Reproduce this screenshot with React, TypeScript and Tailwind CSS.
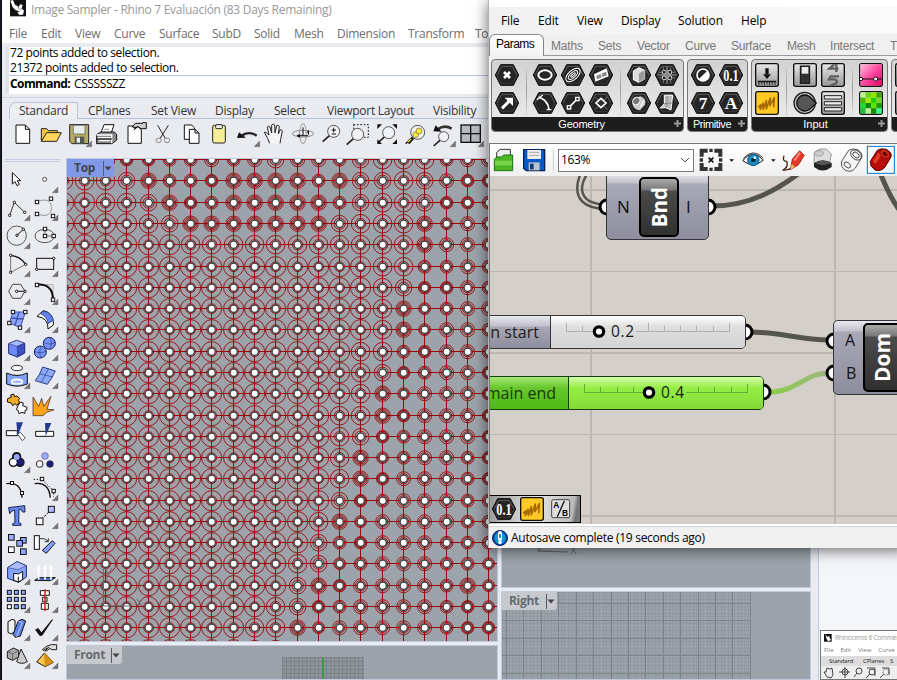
import React from "react";

const sans = "font-['Open_Sans','Noto_Sans',sans-serif]";

/* ---------- Rhino: top toolbar ---------- */
const Corner = ({ x, y }: { x: number; y: number }) => (
  <path d={`M${x} ${y}V${y - 17}L${x - 17} ${y}Z`} fill="#777" stroke="#555" strokeWidth="1" />
);

const lens = (cx: number, cy: number, r = 18) => (
  <g>
    <path d={`M${cx - r * 0.7} ${cy + r * 0.7}L${cx - r - 15} ${cy + r + 13}`} stroke="#222" strokeWidth="5" />
    <circle cx={cx} cy={cy} r={r} fill="#f1f2f5" stroke="#555" strokeWidth="3" />
  </g>
);

const topIcons: React.ReactNode[] = [
  <path d="M48 375H76L89 388V430H48Z M76 375V388H89" fill="#fff" stroke="#111" strokeWidth="3" />,
  <g stroke="#222" strokeWidth="3"><path d="M124 424V386H140L146 392H172V398" fill="#f6c443" /><path d="M124 424L140 398H184L170 424Z" fill="#ffd75e" /></g>,
  <g><path d="M209 374H266V431H216L209 424Z" fill="#b5ae62" stroke="#222" strokeWidth="3" /><path d="M220 376H255V402H220Z" fill="#e9ebed" stroke="#555" strokeWidth="2" /><path d="M224 410H253V431H224Z" fill="#555" /><path d="M230 413H240V428H230Z" fill="#eee" /><Corner x={275} y={440} /></g>,
  <g stroke="#111" strokeWidth="3"><path d="M302 401L312 374H342L333 401Z" fill="#fff" /><path d="M290 404L302 396H342L350 403V420L336 431H290Z" fill="#888" /><path d="M290 405H335V430M293 413H332M296 422H330" fill="none" stroke="#fff" strokeWidth="4" /><path d="M290 417H336" /><path d="M313 388H327" stroke="#888" /></g>,
  <g stroke="#111" strokeWidth="3"><path d="M384 378H412L424 390V430H384Z" fill="#fff" /><path d="M397 381L406 370H428V368H439V386H423L414 380L402 389" fill="#ccc" /><path d="M398 382L409 382M403 388L413 378" /></g>,
  <g fill="none" strokeWidth="3"><path d="M473 376L497 417M505 376L479 417" stroke="#222" /><ellipse cx="476" cy="421" rx="8" ry="7" stroke="#888" /><ellipse cx="501" cy="421" rx="8" ry="7" stroke="#888" /></g>,
  <g fill="#fff" stroke="#111" strokeWidth="3"><path d="M553 375H575L583 383V418H553Z" /><path d="M568 388H585L597 399V430H568Z M585 388V399H597" /></g>,
  <g stroke="#222" strokeWidth="3"><rect x="638" y="376" width="38" height="53" rx="5" fill="#f7ef94" /><rect x="647" y="374" width="20" height="12" rx="3" fill="#eee" /></g>,
  <g><path d="M727 406Q748 392 770 407" fill="none" stroke="#222" strokeWidth="7" /><path d="M711 414L717 397L738 413Z" fill="#111" /><Corner x={779} y={440} /></g>,
  <g fill="#f6f6f6" stroke="#222" strokeWidth="3" strokeLinejoin="round"><path d="M89 430L83 415L73 397Q77 393 84 403L87 405L82 381Q86 375 90 381L95 399L95 375Q99 369 104 375L105 399L110 377Q115 374 118 379L115 402L120 390Q125 388 127 392L122 418L120 430" /></g>,
  <g fill="none" strokeWidth="3"><ellipse cx="189" cy="401" rx="32" ry="10" stroke="#888" /><ellipse cx="189" cy="401" rx="10" ry="30" stroke="#999" /><path d="M177 407H203M189 382V406" stroke="#111" /><path d="M180 401L169 407L180 413ZM201 395L207 390V408Z" fill="#111" stroke="none" /></g>,
  <g>{lens(281, 394)}<path d="M275 390H288M281 383V397M275 402H288" stroke="#111" strokeWidth="3" /></g>,
  <g><rect x="341" y="374" width="44" height="38" fill="none" stroke="#111" strokeWidth="3" strokeDasharray="5 5" />{lens(353, 403)}</g>,
  <g>{lens(446, 398)}<path d="M412 373H426L412 387ZM471 373H457L471 387ZM412 432V418L426 432ZM471 432V418L457 432Z" fill="#111" /></g>,
  <g>{lens(533, 397, 21)}<path d="M505 430L519 414" stroke="#111" strokeWidth="8" /><path d="M503 427L514 417" stroke="#edd63f" strokeWidth="4" /><rect x="519" y="396" width="16" height="16" rx="5" fill="#ffe833" stroke="#665" strokeWidth="2" /><circle cx="537" cy="393" r="9" fill="#ffe833" stroke="#665" strokeWidth="2" /></g>,
  <g>{lens(611, 410, 15)}<path d="M593 388Q614 373 635 386" fill="none" stroke="#333" strokeWidth="8" /><path d="M580 394L587 376L605 395Z" fill="#111" /><Corner x={647} y={440} /></g>,
  <g><rect x="663" y="375" width="58" height="52" fill="#b9bcbe" stroke="#111" strokeWidth="4" /><path d="M692 375V427M663 401H721" stroke="#111" strokeWidth="4" /><Corner x={731} y={440} /></g>,
];

/* ---------- Rhino: side toolbar ---------- */
const Sq = ({ x, y, s = 10, f = "#fff" }: { x: number; y: number; s?: number; f?: string }) => (
  <rect x={x - s / 2} y={y - s / 2} width={s} height={s} fill={f} stroke="#111" strokeWidth="3" />
);
const Dot = ({ x, y }: { x: number; y: number }) => <circle cx={x} cy={y} r="3.6" fill="#fff" stroke="#111" strokeWidth="3" />;
const blue = "#8fa5ff";

type Side = [React.ReactNode, boolean];
const sideIcons: Side[] = [
  [<path d="M37 53V87L45 80L51 92L58 88L52 77H62Z" fill="#fff" stroke="#111" strokeWidth="3" />, false],
  [<circle cx="134" cy="73" r="6" fill="#fff" stroke="#444" strokeWidth="3" />, true],
  [<g><path d="M29 181L43 142L74 172" fill="none" stroke="#333" strokeWidth="3" /><Dot x={29} y={181} /><Dot x={43} y={142} /><Dot x={74} y={172} /></g>, true],
  [<g><path d="M111 140Q153 124 155 158Q153 192 111 177" fill="none" stroke="#999" strokeWidth="3" /><Sq x={111} y={141} /><Sq x={153} y={131} /><Sq x={111} y={177} /><Sq x={159} y={183} /></g>, true],
  [<g><circle cx="50" cy="242" r="29" fill="none" stroke="#555" strokeWidth="3" /><path d="M51 241L70 223" stroke="#111" strokeWidth="3" /><Dot x={51} y={241} /><Dot x={70} y={223} /></g>, true],
  [<g><ellipse cx="134" cy="243" rx="29" ry="20" fill="none" stroke="#555" strokeWidth="3" /><path d="M135 221V243H161" fill="none" stroke="#777" strokeWidth="3" /><Sq x={135} y={222} /><Sq x={135} y={243} /><Sq x={161} y={243} /></g>, true],
  [<g><path d="M32 301V352L77 328" fill="none" stroke="#777" strokeWidth="3" /><path d="M32 301Q62 304 77 328" fill="none" stroke="#111" strokeWidth="4" /><Dot x={32} y={301} /><Dot x={32} y={352} /><Dot x={77} y={328} /></g>, true],
  [<g><rect x="110" y="310" width="51" height="33" fill="none" stroke="#111" strokeWidth="3" /><Dot x={161} y={310} /><Dot x={110} y={343} /></g>, true],
  [<g><path d="M26 409L38 388H62L75 409L62 430H38Z" fill="none" stroke="#444" strokeWidth="3" /><path d="M50 409H75" stroke="#111" strokeWidth="3" /><Dot x={50} y={409} /><Dot x={75} y={409} /></g>, true],
  [<g><path d="M112 389H159V434" fill="none" stroke="#aaa" strokeWidth="3" /><path d="M112 389Q159 386 159 434" fill="none" stroke="#111" strokeWidth="6" /><Sq x={111} y={390} /><Sq x={159} y={434} /></g>, true],
  [<g><path d="M39 471H76L61 518L28 504Z" fill={blue} stroke="#3b52a8" strokeWidth="3" /><path d="M57 471L45 511M34 489L70 492" stroke="#3b52a8" strokeWidth="4" /><Sq x={39} y={471} /><Sq x={76} y={471} /><Sq x={28} y={504} /><Sq x={60} y={518} /></g>, true],
  [<g stroke="#111" strokeWidth="3"><path d="M111 484L130 467Q158 473 160 501V510L144 522Q146 489 111 484Z" fill="#fff" /><path d="M122 476Q140 484 145 506L160 496Q156 474 132 468Z" fill="#5f82ec" stroke="#1b2a6b" strokeWidth="2" /></g>, true],
  [<g stroke="#1b2a6b" strokeWidth="3" strokeLinejoin="round"><path d="M26 41L50 31L74 40V69L52 81L26 71Z" fill="#7089f8" /><path d="M26 41L50 31L74 40L52 49Z" fill="#a9b9ff" strokeWidth="1.5" /><path d="M52 49L74 40V69L52 81Z" fill="#3a50c4" strokeWidth="1.5" /></g>, true],
  [<g fill="#7894fa" stroke="#15245f" strokeWidth="3"><circle cx="148" cy="40" r="18" /><path d="M131 37Q148 47 166 37M149 22Q159 36 150 57" fill="none" strokeWidth="1.500" /><circle cx="121" cy="66" r="18" /><path d="M104 64Q121 73 139 63M124 49Q114 66 124 84" fill="none" strokeWidth="1.500" /></g>, true],
  [<g><ellipse cx="51" cy="114" rx="17" ry="8" fill="#fff" stroke="#333" strokeWidth="3" /><path d="M20 129Q51 144 82 129V162Q51 175 20 162Z" fill="#82a1fb" stroke="#111" strokeWidth="3" /><ellipse cx="51" cy="155" rx="16" ry="7" fill="#a6bbff" stroke="#fff" strokeWidth="5" /></g>, true],
  [<g fill="#8da9fb" stroke="#293c7d" strokeWidth="3"><path d="M128 111L166 123Q160 134 155 144L142 163L106 152Q112 142 118 134Z" /><path d="M146 116L124 157M118 131L158 141" fill="none" strokeWidth="2" /></g>, true],
  [<g stroke="#111" strokeWidth="3"><path d="M34 202L32 195L41 192L44 200L51 198L59 205L55 211L59 216L51 226L45 221L38 227L34 219L22 216L23 206Z" fill="#f4ac27" /><path d="M55 225L62 216L70 219L68 227L81 232L80 240L75 241V250L66 247L57 251L54 241L49 239Z" fill="#fff" /></g>, false],
  [<path d="M99 257V201L116 229L125 205L131 229L153 199L141 238L162 239L140 247L129 257Z" fill="#ffa218" stroke="#222" strokeWidth="2" />, false],
  [<g><path d="M19 302H52V317H19Z" fill="#fff" stroke="#111" strokeWidth="3" /><path d="M52 312L61 307L76 324L67 332Z" fill="#fff" stroke="#555" strokeWidth="3" /><path d="M49 277H69L53 318Z" fill="#23398d" /></g>, false],
  [<g><path d="M107 304H161V319H107Z" fill="#fff" stroke="#111" strokeWidth="3" /><path d="M135 279H154L137 318Z" fill="#23398d" /></g>, false],
  [<g stroke="#111" strokeWidth="6"><circle cx="50" cy="380" r="11" /><circle cx="40" cy="397" r="11" /><circle cx="60" cy="397" r="11" /><g stroke="none"><circle cx="40" cy="397" r="10" fill="#fff" /><circle cx="61" cy="397" r="10" fill="#1c1c78" /><circle cx="50" cy="381" r="9" fill="#9aa0ff" /></g></g>, true],
  [<g><circle cx="135" cy="378" r="10" fill="#9fa9ff" stroke="#558" strokeWidth="2" /><circle cx="119" cy="402" r="10" fill="#fff" stroke="#222" strokeWidth="3" /><circle cx="150" cy="402" r="10" fill="#1d1c82" stroke="#222" strokeWidth="2" /></g>, false],
  [<g><path d="M19 461Q63 453 66 503" fill="none" stroke="#111" strokeWidth="4" /><Sq x={36} y={459} s={9} /><Sq x={66} y={489} s={9} /></g>, false],
  [<g><path d="M104 461Q147 455 151 503" fill="none" stroke="#111" strokeWidth="4" /><path d="M101 448H126L161 483V500" fill="none" stroke="#111" strokeWidth="3" strokeDasharray="4 5" /><Sq x={126} y={447} /><Sq x={161} y={483} /></g>, true],
  [<path d="M26 23L74 17L75 36H68L61 27L57 28L56 68L63 71V76H38V71L45 68L44 30L36 33L29 41Z" fill="#6788f1" stroke="#15234c" strokeWidth="3" />, false],
  [<g><path d="M124 58L149 34" stroke="#111" strokeWidth="3" strokeDasharray="8 4" /><path d="M145 32H152V39" stroke="#111" strokeWidth="3" fill="none" /><Sq x={154} y={28} s={18} f="#b5c0ff" /><Sq x={119} y={64} s={20} f="#f6f6f6" /></g>, true],
  [<g><Sq x={34} y={112} s={17} f="#9eafff" /><Sq x={70} y={121} s={17} f={blue} /><Sq x={59} y={130} s={17} f={blue} /><Sq x={34} y={149} s={17} /><Sq x={70} y={155} s={17} f={blue} /></g>, false],
  [<g stroke="#111" strokeWidth="3"><rect x="103" y="107" width="15" height="41" fill="#fff" /><path d="M157 122L165 130L139 160L127 151Z" fill="#869fff" /><path d="M120 116Q134 113 144 123M145 115V125H134" fill="none" strokeWidth="2.5" /></g>, false],
  [<g stroke="#13276c" strokeWidth="3" strokeLinejoin="round"><path d="M23 203L51 185L79 197V231L56 247L23 235Z" fill="#85a5ff" /><path d="M23 203L51 185L79 197L54 209Z" fill="#adbdff" strokeWidth="1.500" /><path d="M41 220L55 222L68 214V238L56 246L41 241Z" fill="#fff" stroke="#111" /><path d="M55 247V230" stroke="#111" /></g>, true],
  [<g><path d="M104 241L117 233H166L151 242Z" fill="#5575e8" stroke="#111" strokeWidth="3" /><path d="M116 239V203M135 239V203M153 239V203" stroke="#fff" strokeWidth="5" /><path d="M109 207L116 194L123 207ZM128 207L135 194L142 207ZM146 207L153 194L160 207Z" fill="#fff" /></g>, true],
  [<g>{[28, 49, 70].map((x) => [277, 298, 320].map((y) => <Sq key={x + "-" + y} x={x} y={y} s={12} f={x === 28 && y === 320 ? "#fff" : "#91a6ff"} />))}</g>, true],
  [<g fill="#fff" stroke="#111" strokeWidth="3"><path d="M121 272H148V286H121Z" /><path d="M128 292H141V305H128Z" /><path d="M124 310H145V328H124Z" /><path d="M135 268V333" stroke="#e02a2a" strokeWidth="5" /></g>, true],
  [<g stroke="#111" strokeWidth="3"><path d="M24 365L36 358L45 361V395L33 402L24 397Z" fill="#eee" /><path d="M55 363L66 358L77 363L61 408L46 412L39 403Z" fill="#5a7fe9" /><path d="M55 363L67 368L50 410" fill="none" stroke="#c3d0ff" /></g>, true],
  [<path d="M107 389L115 386L124 399L157 359L126 406H119Z" fill="#111" stroke="#111" strokeWidth="3" />, true],
  [<g stroke="#222" strokeWidth="3"><path d="M22 455L40 444L56 451V471L38 481L22 474Z" fill="#aaa" /><path d="M22 455L38 461L56 451M38 461V481" fill="none" strokeWidth="1.500" /><path d="M63 447L82 485Q64 495 50 485Z" fill="#ccc" /></g>, true],
  [<g stroke="#222" strokeWidth="3"><path d="M133 459L160 487L136 500L110 486Z" fill="#ffc548" /><path d="M133 459L136 500L160 487Z" fill="#d99017" stroke="#a86c10" strokeWidth="1" /><path d="M126 450L141 438L154 434H170V449H156L145 443L134 454" fill="#ddd" /><path d="M129 452L146 442M137 454L148 447" /></g>, true],
];

/* ---------- Rhino: circles model in the Top viewport ---------- */
const rings: Record<string, number[]> = {
  a: [10.1, 4.9],
  b: [9.3, 5.2],
  c: [8.3, 5.6],
  d: [7.7, 6.2, 4.9],
  e: [6.4, 5.1],
  f: [5.9, 4.9],
  g: [7, 5.1],
  x: [6.2, 5.4, 4.8],
};
const model = [
  "bbxxeegegcggecbbbegg",
  "bbcdeexddddedccbcgxx",
  "abbcdxedddddecbbcxxe",
  "aaabcdddddddcbbbdfge",
  "aaaaabbbbbbbbbbbdgge",
  "aaaaaaaaaaaaaabbeege",
  "aaaaaaaaaaaaaabcxxge",
  "aaaaaaaaaaaaaabdfegg",
  "aaaaaaaaaaaaaabdfgge",
  "aaaaaaaaaaaaabbexgge",
  "aaaaaaaaaaaaabcxeggx",
  "aaaaaaaaaaaaabdfgggx",
  "aaaaaaaaaaaabbdxgggx",
  "aaaaaaaaaaaabcxegggx",
  "aaaaaaaaaaaabdfeggex",
  "aaaaaaaaaaaabdxgggex",
  "aaaaaaaaaaaacxegggee",
  "aaaaaaaaaaabdfggggee",
  "aaaaaaaaaaacexgggeee",
  "aaaaaaaaaabcfegggeef",
  "aaaaaaaaaacdxggggedf",
  "aaaaaaaaabcxeggggexf",
  "aaaaaaaabbdfgggggexx",
  "aaaaaaaabbcfggggggxx",
];
const PITCH = 21.28;

const CircleModel = () => {
  const cols = Array.from({ length: 21 }, (_, i) => i - 1);
  const px = (i: number) => Math.round(16.8 + PITCH * i) + 0.5;
  const py = (j: number) => Math.round(0.15 + PITCH * j) + 0.5;
  return (
    <svg width="430" height="482" viewBox="0 0 430 482" className="block">
      <g stroke="#98080c" strokeWidth="1" shapeRendering="crispEdges">
        {cols.map((i) => <path key={i} d={`M${px(i)} 0V482`} />)}
        {model.map((_, j) => <path key={j} d={`M0 ${py(j)}H430`} />)}
      </g>
      <g fill="none" stroke="#98080c" strokeWidth="0.9">
        {model.map((row, j) =>
          cols.map((i) => rings[row[Math.max(0, i)]].map((r) => <circle key={`${i}-${j}-${r}`} cx={px(i) + 0.1} cy={py(j) + 0.2} r={r} />)),
        )}
      </g>
      <g fill="#fff" stroke="#3a3c3e" strokeWidth="1.3">
        {model.map((_, j) => cols.map((i) => <circle key={`${i}-${j}`} cx={px(i) + 0.2} cy={py(j) + 0.2} r="3.6" />))}
      </g>
      <g stroke="#63676b" strokeWidth="1" fill="none">
        <path d="M36.500 447V410M36.500 447H64M38 409L41 415M45 409L39 420M70 440L75 447M75 440L70 447" />
      </g>
    </svg>
  );
};

const ViewTag = ({ label, active, w }: { label: string; active?: boolean; w: string }) => (
  <div className={`flex h-[18px] items-center ${w} ${active ? "bg-[#8299ea]" : "rounded-br-[3px] bg-[#c6cacf]"} text-[12px] font-bold ${active ? "text-[#3f4450]" : "text-[#666a6e]"}`}>
    <span className="flex-1 pl-[7px] leading-[18px] tracking-[-0.300px]">{label}</span>
    <span className="flex h-[15px] w-[11px] items-center border-l border-[#555b66]">
      <svg width="8" height="5" className="shrink-0"><path d="M0.500 0.500H7.500L4 4.500Z" fill="#444" /></svg>
    </span>
  </div>
);

/* ---------- Grasshopper ribbon ---------- */
const Hex = ({ children }: { children?: React.ReactNode }) => (
  <svg width="26" height="24" viewBox="0 0 78 72" className="shrink-0">
    <path d="M4 36L20 5H58L74 36L58 67H20Z" fill="#252525" stroke="#080808" strokeWidth="3" strokeLinejoin="round" />
    <path d="M9 36L23 10H55L69 36" fill="none" stroke="#666" strokeWidth="2.500" />
    <path d="M9 37L23 62H55L69 37" fill="none" stroke="#444" strokeWidth="2" />
    {children}
  </svg>
);
const HexText = ({ t }: { t: string }) => (
  <Hex><text x="39" y="53" textAnchor="middle" fontFamily="Liberation Serif, serif" fontWeight="700" fontSize="50" fill="#fff" textLength={t.length > 1 ? 46 : t === "7" ? 26 : 38} lengthAdjust="spacingAndGlyphs">{t}</text></Hex>
);
const Tile = ({ children, yellow }: { children?: React.ReactNode; yellow?: boolean }) => (
  <svg width="24" height="24" viewBox="0 0 72 72" className="shrink-0">
    <defs><linearGradient id="tile" x2="0" y2="1"><stop stopColor="#e8e8e8" /><stop offset="1" stopColor="#999" /></linearGradient></defs>
    <rect x="2" y="2" width="68" height="68" rx="6" fill={yellow ? "#ffc926" : "url(#tile)"} stroke="#111" strokeWidth="4" />
    {children}
  </svg>
);
const Scribble = () => (
  <Tile yellow><path d="M10 49L16 42L16 55L24 36L25 55L34 29L34 53L46 21L45 44L58 20L56 49" fill="none" stroke="#a56900" strokeWidth="5" strokeLinejoin="round" /></Tile>
);

const geomA = [
  <Hex><path d="M30 27L48 45M48 27L30 45" stroke="#fff" strokeWidth="8" /></Hex>,
  <Hex><path d="M24 52L45 31" stroke="#fff" strokeWidth="9" /><path d="M32 20H57V45Z" fill="#fff" /></Hex>,
];
const geomB = [
  <Hex><ellipse cx="39" cy="36" rx="20" ry="14" fill="none" stroke="#fff" strokeWidth="6" /></Hex>,
  <Hex><g fill="none" stroke="#fff" strokeWidth="3" transform="rotate(-42 39 36)"><ellipse cx="39" cy="36" rx="26" ry="14" /><ellipse cx="39" cy="36" rx="17" ry="8" /><ellipse cx="39" cy="36" rx="9" ry="3" /></g></Hex>,
  <Hex><path d="M18 34L56 16L62 40L22 56Z" fill="#fff" /><path d="M25 38L54 26L57 37L27 49Z" fill="#888" /><path d="M38 30L44 46" stroke="#fff" strokeWidth="3" /></Hex>,
  <Hex><path d="M20 18Q49 29 51 56" fill="none" stroke="#fff" strokeWidth="5" /><path d="M15 26L32 12M44 56H58" stroke="#fff" strokeWidth="4" /></Hex>,
  <Hex><path d="M27 49L52 24" stroke="#fff" strokeWidth="5" /><path d="M22 44H32V54H22ZM47 19H57V29H47Z" fill="#333" stroke="#fff" strokeWidth="4" /></Hex>,
  <Hex><path d="M22 18L57 55M57 18L22 55" stroke="#999" strokeWidth="2" /><path d="M39 22L54 36L39 50L24 36Z" fill="#333" stroke="#fff" strokeWidth="5" /></Hex>,
];
const geomC = [
  <Hex><path d="M22 24L39 14L56 22V48L38 58L22 50Z" fill="#ddd" stroke="#fff" strokeWidth="3" /><path d="M22 24L39 31V57L56 48V22L39 31Z" fill="#999" /></Hex>,
  <Hex><g fill="none" stroke="#ddd" strokeWidth="3"><path d="M39 10V62M12 36H66" stroke="#aaa" /><rect x="25" y="22" width="11" height="11" rx="3" /><rect x="42" y="22" width="11" height="11" rx="3" /><rect x="25" y="39" width="11" height="11" rx="3" /><rect x="42" y="39" width="11" height="11" rx="3" /><path d="M28 13V20M50 13V20M28 52V59M50 52V59M16 28H23M16 44H23M55 28H62M55 44H62" stroke="#888" /></g></Hex>,
  <Hex><path d="M24 22L44 16Q62 23 57 41L42 58Q22 56 19 38Z" fill="#ccc" /><ellipse cx="31" cy="30" rx="12" ry="10" transform="rotate(-50 31 30)" fill="#777" stroke="#fff" strokeWidth="3" /><path d="M43 48L54 29" stroke="#fff" strokeWidth="4" /></Hex>,
  <Hex><path d="M31 13H56L51 57L35 50L19 51L31 38Z" fill="#bbb" stroke="#fff" strokeWidth="3" /><path d="M40 14L38 49M29 38L55 36" stroke="#777" strokeWidth="2" /></Hex>,
];
const prim = [
  <Hex><circle cx="39" cy="36" r="18" fill="none" stroke="#fff" strokeWidth="5" /><path d="M26 49A18 18 0 0 0 52 23Z" fill="#fff" /></Hex>,
  <HexText t="0.1" />,
  <HexText t="7" />,
  <HexText t="A" />,
];
const inA = [
  <Tile><path d="M36 16V34" stroke="#111" strokeWidth="10" /><path d="M24 34H48L36 48ZM8 53H64V58H8Z" fill="#111" /><path d="M12 57V66M20 57V64M28 57V66M36 57V64M44 57V66M52 57V64M60 57V66" stroke="#222" strokeWidth="3" /></Tile>,
  <Scribble />,
];
const inB = [
  <Tile><rect x="22" y="9" width="28" height="52" fill="#333" stroke="#111" strokeWidth="3" /><rect x="26" y="12" width="20" height="20" fill="#eee" /></Tile>,
  <Tile><path d="M40 4L25 17H52M46 3V27M54 40H29L24 49H40Q54 53 44 62L28 68" fill="none" stroke="#5f5f5f" strokeWidth="7" /></Tile>,
  <svg width="24" height="24" viewBox="0 0 72 72"><circle cx="35" cy="36" r="32" fill="#bbb" stroke="#222" strokeWidth="4" /><path d="M50 17L70 36L50 55A24 24 0 1 1 50 17Z" fill="#555" stroke="#111" strokeWidth="4" /></svg>,
  <Tile><path d="M10 14H62V24H10ZM10 32H62V42H10ZM10 50H62V60H10Z" fill="#eee" stroke="#222" strokeWidth="3" /></Tile>,
];
const greens = ["#bdf28c", "#68d71c", "#91e900", "#3ca300", "#4cb500", "#a3e600", "#1ad400", "#7bd32c", "#1ade2b", "#0f8900", "#5fe500", "#1a9d00", "#1dbe32", "#b9f09c", "#188c00", "#30ff8a"];
const inC = [
  <Tile><defs><linearGradient id="pink" x2="1" y2="1"><stop stopColor="#ffc0dc" /><stop offset=".5" stopColor="#ff4aa0" /><stop offset="1" stopColor="#e40067" /></linearGradient></defs><rect x="4" y="4" width="64" height="64" fill="url(#pink)" /><path d="M4 48H68" stroke="#111" strokeWidth="3" /><circle cx="6" cy="48" r="5" fill="#fff" stroke="#111" strokeWidth="3" /><circle cx="50" cy="48" r="6" fill="#fff" stroke="#111" strokeWidth="3" /></Tile>,
  <Tile>{greens.map((c, i) => <rect key={i} x={4 + (i % 4) * 16} y={4 + Math.floor(i / 4) * 16} width="16" height="16" fill={c} />)}</Tile>,
];

const Cells = ({ items, n }: { items: React.ReactNode[]; n: 1 | 2 | 3 }) => (
  <div className={`grid grid-rows-2 ${n === 1 ? "grid-cols-[28px]" : n === 2 ? "grid-cols-[28px_28px]" : "grid-cols-[28px_28px_28px]"}`}>
    {items.map((it, i) => <div key={i} className="flex h-[28px] items-center justify-center">{it}</div>)}
  </div>
);
const Sep = () => <div className="mx-[4.500px] h-[54px] w-px self-center bg-gradient-to-b from-[#ddd] via-[#999] to-[#ddd]" />;
const Group = ({ label, w, children }: { label: string; w: string; children?: React.ReactNode }) => (
  <section className={`flex h-[73px] shrink-0 flex-col overflow-hidden rounded-[4px] border border-[#777] bg-gradient-to-b from-[#d2d2d2] to-[#efefef] ${w}`}>
    <div className="flex h-[58px] px-px pt-px">{children}</div>
    <div className="relative flex h-[14px] items-center justify-center bg-[#1d1d1d] font-['Liberation_Sans',sans-serif] text-[11px] leading-[14px] text-white">
      <span className={label === "Primitive" ? "pr-[11px] tracking-[-0.450px]" : label === "Input" ? "pr-[8px]" : "pr-[12px] tracking-[-0.250px]"}>{label}</span>
      <svg width="7" height="7" className="absolute right-[2px] top-[3px]"><path d="M3.500 0V7M0 3.500H7" stroke="#999" strokeWidth="2" /></svg>
    </div>
  </section>
);

/* ---------- Grasshopper canvas ---------- */
const Core = ({ label, cls }: { label: string; cls: string }) => (
  <div className={`absolute flex items-center justify-center rounded-[5px] border-[2px] border-black bg-[linear-gradient(#aaa_0,#777_11px,#4b4b4b_12px,#303030_100%)] ${cls}`}>
    <span className="rotate-[-90deg] font-bold leading-none text-white">{label}</span>
  </div>
);
const metal = "bg-[linear-gradient(#e9e9ef_0,#c1c0cb_10px,#a9a8b6_11px,#8e8d9d_100%)]";

const Grip = ({ x, y, left }: { x: number; y: number; left?: boolean }) => (
  <path d={left ? `M${x} ${y - 7}A7 7 0 0 0 ${x} ${y + 7}` : `M${x} ${y - 7}A7 7 0 0 1 ${x} ${y + 7}`} fill="#fff" stroke="#000" strokeWidth="3" />
);

const Slider = ({ value, green, knob }: { value: string; green?: boolean; knob: number }) => {
  const ticks = Array.from({ length: 11 }, (_, i) => ({ x: 15.5 + Math.round(i * 16.3), top: i % 5 ? 10 : 7 })).filter(
    (t) => t.x < knob - 6 || t.x > knob + 36,
  );
  return (
    <svg width="194" height="31" viewBox="0 0 194 31" className="block">
      <g stroke={green ? "#67ae31" : "#b0b0b0"} strokeWidth="1">
        <path d={`M15 15.500H${knob - 6}M${knob + 37} 15.500H179`} />
        {ticks.map((t) => <path key={t.x} d={`M${t.x} ${t.top}V15`} />)}
      </g>
      <circle cx={knob} cy="15.500" r="4.700" fill="#fff" stroke="#000" strokeWidth="3.200" />
      <text x={knob + 12} y="21" fontSize="15.500" fill="#1b1b1b" textLength="23">{value}</text>
    </svg>
  );
};

const Canvas = () => (
  <div className="relative h-[348px] overflow-hidden bg-[#d4cfc8]">
    <svg width="407" height="348" viewBox="490 176 407 348" className="absolute inset-0">
      <g stroke="#bcb8b1" fill="none">
        <path d="M490 190H897M490 353H897M490 516H897M591 176V524M835 176V524" strokeWidth="2" />
        <path d="M490 271.500H897M490 434.500H897" />
      </g>
      <g fill="none" stroke="#55554f">
        <path d="M582 170C573 190 575 207 604 209" strokeWidth="2.500" />
        <path d="M590 170C577 187 579 203 604 204.500" strokeWidth="2.500" />
        <path d="M712 206C750 206 778 190 806 168" strokeWidth="5" />
        <path d="M879 170Q889 196 900 211" strokeWidth="5" />
        <path d="M750 332C780 332 800 340 829 340" strokeWidth="5" />
      </g>
      <linearGradient id="wire" x2="1"><stop stopColor="#88cf43" /><stop offset="1" stopColor="#9eb583" /></linearGradient>
      <path d="M768 392C798 392 804 373 829 373" stroke="url(#wire)" strokeWidth="5" fill="none" />
      <Grip x={607} y={207} left /><Grip x={708} y={207} />
      <Grip x={745} y={332} /><Grip x={763} y={392} />
      <Grip x={834} y={341} left /><Grip x={834} y={373} left />
    </svg>
    <div className={`absolute left-[116px] top-[-4px] h-[68px] w-[103px] rounded-[5px] border-[1.500px] border-[#34343a] ${metal} text-[17px] text-[#111]`}>
      <span className="absolute left-[10px] top-[21px]">N</span>
      <span className="absolute left-[79px] top-[21px]">I</span>
      <Core label="Bnd" cls="left-[32px] top-[4px] h-[60px] w-[40px] text-[20.500px]" />
    </div>
    <div className="absolute left-[-60px] top-[139px] flex h-[34px] w-[316px] overflow-hidden rounded-[5px] border-[1.500px] border-[#34343a] text-[16px] text-[#1b1b1b]">
      <div className={`flex w-[120px] items-center justify-end border-r-[1.500px] border-[#34343a] pr-[11px] tracking-[0.050px] ${metal}`}>n&nbsp;start</div>
      <div className="flex-1 bg-[linear-gradient(#fff,#dedede_11px,#d4d4d4)]"><Slider value="0.2" knob={48} /></div>
    </div>
    <div className="absolute left-[-60px] top-[200px] flex h-[34px] w-[334px] overflow-hidden rounded-[5px] border-[1.500px] border-[#133f08] text-[16px] text-[#173a08]">
      <div className="flex w-[138px] items-center justify-end whitespace-nowrap border-r-[1.500px] border-[#133f08] bg-[linear-gradient(#a6e878,#67c72c_11px,#4eb914)] pr-[12px]">main end</div>
      <div className="flex-1 bg-[linear-gradient(#d7fbac,#95ee45_11px,#83da36)]"><Slider value="0.4" knob={80} green /></div>
    </div>
    <div className={`absolute left-[343px] top-[144px] h-[75px] w-[90px] rounded-[5px] border-[1.500px] border-[#34343a] ${metal} text-[16px] text-[#111]`}>
      <span className="absolute left-[11px] top-[7px]">A</span>
      <span className="absolute left-[12px] top-[40px]">B</span>
      <Core label="Dom" cls="left-[29px] top-[2px] h-[69px] w-[40px] text-[21px]" />
    </div>
    <div className="absolute bottom-[1px] left-0 flex h-[28px] w-[91px] items-center border-[1.500px] border-l-0 border-black bg-[linear-gradient(100deg,#999,#e4e4e4_50%,#bbb_90%,#777_94%)] pl-[1px]">
      <HexText t="0.1" />
      <span className="ml-[3px]"><Scribble /></span>
      <svg width="20" height="20" viewBox="0 0 60 60" className="ml-[7px]">
        <rect x="2" y="2" width="54" height="54" rx="5" fill="#dedede" stroke="#444" strokeWidth="3" />
        <path d="M40 6L19 53" stroke="#111" strokeWidth="4" />
        <text x="7" y="28" fontFamily="Liberation Sans" fontSize="25" fontWeight="700">A</text>
        <text x="33" y="50" fontFamily="Liberation Sans" fontSize="25" fontWeight="700">B</text>
      </svg>
    </div>
  </div>
);

const rhinoMenu = [["File", "w-[32px]"], ["Edit", "w-[34px]"], ["View", "w-[39px]"], ["Curve", "w-[45px]"], ["Surface", "w-[53px]"], ["SubD", "w-[42px]"], ["Solid", "w-[40px]"], ["Mesh", "w-[43px]"], ["Dimension", "w-[71px]"], ["Transform", "w-[67px]"], ["To", "w-[20px]"]];
const rhinoTabs = [["CPlanes", "w-[63px]"], ["Set View", "w-[64px]"], ["Display", "w-[59px]"], ["Select", "w-[53px]"], ["Viewport Layout", "w-[106px]"], ["Visibility", "w-[60px]"]];
const ghMenu = [["File", "w-[37px]"], ["Edit", "w-[39px]"], ["View", "w-[44px]"], ["Display", "w-[57px]"], ["Solution", "w-[63px]"], ["Help", "w-[40px]"]];
const ghTabs = [["Maths", "w-[47px]"], ["Sets", "w-[39px]"], ["Vector", "w-[48px]"], ["Curve", "w-[46px]"], ["Surface", "w-[56px]"], ["Mesh", "w-[43px]"], ["Intersect", "w-[60px]"], ["T", "w-[8px]"]];

const RhinoLogo = () => (
  <svg width="17" height="17" viewBox="0 0 51 51"><rect width="48" height="49" fill="#111" /><path d="M9 0L15 14L27 20L30 13L38 15L35 25L42 32L39 44L28 45L22 37L30 34L17 31L8 22L1 2Z" fill="#fff" /><path d="M21 17L29 28L36 26" stroke="#888" strokeWidth="3" fill="none" /></svg>
);

const Rhino = () => (
  <div className="flex h-[680px] flex-1 flex-col bg-[#e9ebf0]">
    <header className="h-[43px] bg-white">
      <div className="flex h-[20px] pl-[8px]">
        <RhinoLogo />
        <span className="ml-[4px] text-[12px] leading-[19px] tracking-[-0.280px] text-[#999]">Image Sampler - Rhino 7 Evaluación (83 Days Remaining)</span>
      </div>
      <nav className="flex pl-[7px] pt-[5px] text-[12px] leading-[18px] tracking-[-0.250px] text-[#6d6d6d]">
        {rhinoMenu.map(([t, w]) => <span key={t} className={`shrink-0 whitespace-nowrap ${w}`}>{t}</span>)}
      </nav>
    </header>
    <div className="mt-[4px] h-[47px] bg-[#e9ebf0]">
      <div className="ml-[7px] h-[47px] bg-white text-[12px] tracking-[-0.410px] text-black shadow-[-3px_0_0_#dde1ea]">
        <div className="h-[29px] border-b border-[#b8c4da] pl-px">
          <p className="h-[13px] leading-[12px]">72 points added to selection.</p>
          <p className="h-[15px] leading-[15px]">21372 points added to selection.</p>
        </div>
        <div className="pl-px leading-[16px]"><b className="tracking-[-0.600px]">Command:</b><span className="ml-[4px] tracking-[-0.400px]">CSSSSSZZ</span></div>
      </div>
    </div>
    <div className="mt-[3px] flex h-[23px] border-t border-[#ccd3e1] pt-[4px] text-[12px] leading-[17px] tracking-[-0.250px] text-[#333]">
      <div className="ml-[7px] h-[17px] w-[69px] rounded-tl-[7px] rounded-tr-[2px] border-l border-r border-t border-[#b7c3dc] bg-[#edeff3] pl-[9px] leading-[15px]">Standard</div>
      <div className="flex h-[17px] flex-1 border-b border-[#b7c3dc] pl-[10px] leading-[17px]">
        {rhinoTabs.map(([t, w]) => <span key={t} className={`shrink-0 whitespace-nowrap ${w}`}>{t}</span>)}
      </div>
    </div>
    <div className="flex h-[30px] pl-[6px]">
      {topIcons.map((ic, i) => (
        <svg key={i} width="28" height="30" viewBox={`${(i < 9 ? 24 : -696) + 84 * i} 360 84 90`} className="shrink-0 overflow-visible">{ic}</svg>
      ))}
    </div>
    <div className="flex h-[530px]">
      <aside className="w-[64px] shrink-0 pt-[9px]">
        <div className="ml-[3px] h-[3px] w-[55px] border-y border-[#c4cddf]" />
        <div className="mt-[4px] grid grid-cols-[28px_28px] pl-px">
          {sideIcons.map(([ic, corner], i) => {
            const r = Math.floor(i / 2);
            const vx = i % 2 ? 93 : 9;
            const vy = r < 6 ? 33 + 84 * r : r < 12 ? -492 + 84 * r : -1002 + 84 * r;
            return (
              <svg key={i} width="28" height="28" viewBox={`${vx} ${vy} 84 84`} className="overflow-visible">
                {ic}
                {corner && <Corner x={vx + 81} y={vy + 80} />}
              </svg>
            );
          })}
        </div>
      </aside>
      <main className="grid h-[530px] w-[745px] shrink-0 grid-cols-[432px_310px] gap-x-[3px] pt-[8px]">
        <div className="flex flex-col gap-[3px]">
          <div className="relative h-[484px] overflow-hidden border border-[#c0c9db] bg-[#9ca3aa]">
            <CircleModel />
            <div className="absolute left-0 top-0"><ViewTag label="Top" active w="w-[47px]" /></div>
          </div>
          <div className="flex h-[35px] overflow-hidden border border-[#c0c9db] bg-[#9ca3aa]">
            <ViewTag label="Front" w="w-[55px]" />
            <svg width="82" height="23" className="ml-[160px] mt-[11px]">
              <rect width="82" height="23" fill="#8d949a" />
              <path d={Array.from({ length: 21 }, (_, i) => `M${i * 4 + 0.5} 0V23`).join("") + Array.from({ length: 6 }, (_, i) => `M0 ${i * 4 + 0.5}H82`).join("")} stroke="#7d838a" />
              <path d="M41 0V23" stroke="#3e964a" strokeWidth="2" />
            </svg>
          </div>
        </div>
        <div className="flex flex-col gap-[3px]">
          <div className="h-[430px] border border-[#c0c9db] bg-[#9ca3aa] pl-[35px] pt-[378px]">
            <svg width="42" height="18"><path d="M1 10V14L31 15M1 14L8 8M34 9L39 17M39 9L34 17" stroke="#666" fill="none" /></svg>
          </div>
          <div className="h-[89px] border border-[#c0c9db] bg-[#9ca3aa]">
            <div className="relative h-[87px]">
              <svg width="250" height="87" className="block">
                <path d={Array.from({ length: 72 }, (_, i) => `M${Math.round(i * 3.47) + 0.5} 0V87`).join("") + Array.from({ length: 26 }, (_, i) => `M0 ${Math.round(i * 3.47) + 0.5}H249`).join("")} stroke="#929aa1" />
                <path d={Array.from({ length: 15 }, (_, i) => `M${Math.round(4 + i * 17.42) + 0.5} 0V87`).join("") + Array.from({ length: 5 }, (_, i) => `M0 ${Math.round(11 + i * 17.4) + 0.5}H249`).join("")} stroke="#7d848b" />
              </svg>
              <div className="absolute left-0 top-0"><ViewTag label="Right" w="w-[55px]" /></div>
            </div>
          </div>
        </div>
      </main>
      <div className="ml-[7px] flex flex-1 flex-col justify-end border-l border-[#c0c8da] bg-[#f5f6fa] pl-px">
        <div className="h-[50px] overflow-hidden border border-[#777] bg-[#eee] text-[#777]">
          <div className="flex h-[13px] items-center gap-[3px] bg-white pl-[3px] text-[6.500px]"><svg width="8" height="8" viewBox="0 0 51 51"><rect width="49" height="49" fill="#111" /><path d="M8 2L20 18L33 12L38 28L45 39L27 46L17 33Z" fill="#fff" /></svg><span className="whitespace-nowrap tracking-[-0.200px] text-[#999]">Rhinoceros 6 Commercial</span></div>
          <div className="flex h-[12px] items-center gap-[7px] bg-white pl-[3px] text-[6px]"><span>File</span><span>Edit</span><span>View</span><span>Curve</span></div>
          <div className="flex h-[10px] items-center bg-[#ddd] pl-[8px] text-[6px] tracking-[-0.150px] text-[#222]"><span className="w-[34px]">Standard</span><span className="w-[27px]">CPlanes</span><span>S</span></div>
          <svg width="80" height="14" viewBox="0 0 80 14" fill="none" stroke="#444"><path d="M6 11L3 6L5 6L6 2L9 3L11 2L12 9L10 12ZM18 6H29M24 1V12" /><circle cx="24" cy="6" r="3" /><circle cx="38" cy="5" r="3" /><path d="M36 7L33 11M49 8L45 12M46 2H54V10M63 8L59 12M61 2H68V9" /><circle cx="51" cy="6" r="3" /><circle cx="65" cy="6" r="3" strokeDasharray="1 1" /></svg>
        </div>
      </div>
    </div>
  </div>
);

const Grasshopper = () => (
  <div className="absolute left-[488px] top-0 h-[548px] w-[420px] overflow-hidden border-l border-[#b4b4b4] bg-[#f0f0f0] shadow-[0_2px_14px_rgba(0,0,0,0.6)]">
    <div className="h-[7px] bg-white" />
    <nav className="flex h-[27px] bg-gradient-to-r from-[#f1f1f1] to-[#fafafa] pl-[12px] text-[12px] leading-[27px] tracking-[-0.150px] text-black">
      {ghMenu.map(([t, w]) => <span key={t} className={`shrink-0 whitespace-nowrap ${w}`}>{t}</span>)}
    </nav>
    <div className="flex h-[22px] font-['Liberation_Sans',sans-serif] text-[12px] tracking-[-0.200px] text-[#777]">
      <div className="h-[22px] w-[55px] rounded-t-[6px] border border-b-0 border-[#888] bg-gradient-to-b from-white to-[#f2f2f2] pl-[6px] leading-[19px] tracking-[-0.500px] text-black">Params</div>
      <div className="flex flex-1 border-b border-[#999] pl-[7px] leading-[24px]">
        {ghTabs.map(([t, w]) => <span key={t} className={`shrink-0 whitespace-nowrap ${w}`}>{t}</span>)}
      </div>
    </div>
    <div className="flex h-[88px] gap-[3px] border-b border-[#777] bg-[#f0f0f0] pl-[2px] pt-[3px]">
      <Group label="Geometry" w="w-[193px]"><Cells items={geomA} n={1} /><Sep /><Cells items={geomB} n={3} /><Sep /><Cells items={geomC} n={2} /></Group>
      <Group label="Primitive" w="w-[61px]"><Cells items={prim} n={2} /></Group>
      <Group label="Input" w="w-[137px]"><Cells items={inA} n={1} /><Sep /><Cells items={inB} n={2} /><Sep /><Cells items={inC} n={1} /></Group>
      <Group label="" w="w-[60px]"><Cells items={[<Tile />, <Tile />]} n={1} /></Group>
    </div>
    <div className="border-l border-[#777]">
      <div className="flex h-[32px] items-center bg-gradient-to-b from-white to-[#f0f0f0]">
        <svg width="64" height="32" viewBox="15 432 192 96" className="shrink-0">
          <path d="M35 465V457L46 448H76V475H35Z" fill="#eee" stroke="#333" strokeWidth="3" />
          <path d="M28 478L35 471H49L57 465H83V512H28Z" fill="#4db526" stroke="#14740b" strokeWidth="3" />
          <path d="M30 482H81V496H30Z" fill="#77d34a" />
          <path d="M116 449H179V512H124L116 505Z" fill="#0759c8" stroke="#06215e" strokeWidth="4" />
          <path d="M127 450H168V477H127Z" fill="#eee" /><path d="M132 457H163M132 466H163" stroke="#aaa" strokeWidth="3" />
          <path d="M131 487H164V511H131Z" fill="#b8c2cb" /><path d="M135 491H146V508H135Z" fill="#143979" />
          <path d="M205 450V512" stroke="#bbb" strokeWidth="2" />
        </svg>
        <div className="ml-[4px] flex h-[23px] w-[136px] shrink-0 items-center justify-between border border-[#7a7a7a] bg-white pl-[2px] pr-[3px] text-[12px] tracking-[-0.400px]">
          <span>163%</span>
          <svg width="10" height="6" fill="none" stroke="#555"><path d="M1 1L5 5L9 1" /></svg>
        </div>
        <svg width="204" height="32" viewBox="27 432 612 96" className="shrink-0">
          <g fill="#333"><path d="M44 446H68V458H56V470H44ZM88 446H112V470H100V458H88ZM44 513V489H56V501H68V513ZM112 513H88V501H100V489H112ZM73 446H83V456H73ZM73 503H83V513H73ZM44 475H54V485H44ZM102 475H112V485H102Z" /><path d="M71 473L85 487M85 473L71 487" stroke="#111" strokeWidth="5" /></g>
          <path d="M133 478H147L140 485ZM258 478H272L265 485Z" fill="#111" />
          <path d="M173 482Q203 444 235 480Q207 507 173 482Z" fill="#fff" stroke="#111" strokeWidth="3" /><circle cx="205" cy="480" r="17" fill="#168fc7" stroke="#064f7a" strokeWidth="3" /><circle cx="205" cy="480" r="7" fill="#052a3e" /><circle cx="209" cy="473" r="4" fill="#fff" /><path d="M175 475Q204 443 234 473" fill="none" stroke="#444" strokeWidth="3" />
          <path d="M297 467Q291 484 305 484Q312 501 293 511Q313 509 321 503" fill="none" stroke="#421" strokeWidth="4" /><path d="M316 509L322 477L344 452L358 466L340 495Z" fill="#e53928" stroke="#811" strokeWidth="2" /><path d="M316 509L320 492L330 500Z" fill="#e7ba67" /><path d="M345 458L328 482" stroke="#ff8878" strokeWidth="6" />
          <path d="M387 491L388 457L405 447H424L439 462L434 487Z" fill="#ddd" stroke="#999" strokeWidth="3" /><ellipse cx="402" cy="460" rx="13" ry="8" fill="#ccc" stroke="#888" strokeWidth="2" /><path d="M387 489Q413 472 440 489V501Q413 522 387 501Z" fill="#222" /><path d="M389 489Q414 476 439 489Q414 502 389 489Z" fill="#555" />
          <g fill="none" stroke="#333" strokeWidth="2.500"><path d="M470 484L491 451Q502 444 518 449Q535 460 530 473L511 504Q500 518 483 512Q466 502 470 484Z" fill="#f6f6f6" /><ellipse cx="513" cy="465" rx="18" ry="13" transform="rotate(40 513 465)" /><ellipse cx="513" cy="465" rx="11" ry="7" transform="rotate(40 513 465)" /><ellipse cx="487" cy="495" rx="11" ry="7" transform="rotate(40 487 495)" /></g>
          <rect x="547" y="439" width="81" height="81" fill="#f5faff" stroke="#0078d7" strokeWidth="3" /><path d="M556 484L577 451Q588 444 604 448Q622 458 618 471L600 501Q588 516 570 510Q554 500 556 484Z" fill="#b80c08" stroke="#500" strokeWidth="3" /><path d="M581 457L563 484L572 492L589 466Z" fill="#e03a2a" /><ellipse cx="600" cy="462" rx="17" ry="12" transform="rotate(38 600 462)" fill="#c92a1e" stroke="#700" strokeWidth="2" /><ellipse cx="600" cy="462" rx="8" ry="5" transform="rotate(38 600 462)" fill="#5d0500" />
        </svg>
      </div>
      <Canvas />
    </div>
    <div className="h-[3px] border-b border-[#d8d8d8] bg-white" />
    <div className="flex h-[21px] items-center gap-[3px] pl-[3px] text-[12px] tracking-[-0.280px] text-black">
      <svg width="16" height="16"><circle cx="8" cy="8" r="7.500" fill="#0754a0" stroke="#061866" /><circle cx="8" cy="8" r="5.500" fill="#1595d6" /><path d="M8 3V9" stroke="#fff" strokeWidth="4" strokeLinecap="round" /><path d="M8 4V8" stroke="#0754a0" strokeWidth="1.500" /><circle cx="8" cy="12.500" r="1.800" fill="#fff" /></svg>
      <span>Autosave complete (19 seconds ago)</span>
    </div>
  </div>
);

export default function App() {
  return (
    <div className={`relative flex h-[680px] w-[897px] overflow-hidden bg-[#15151b] ${sans}`}>
      <div className="w-[2px] shrink-0 bg-gradient-to-r from-[#1d1d2a] to-[#08080a]" />
      <Rhino />
      <Grasshopper />
    </div>
  );
}
